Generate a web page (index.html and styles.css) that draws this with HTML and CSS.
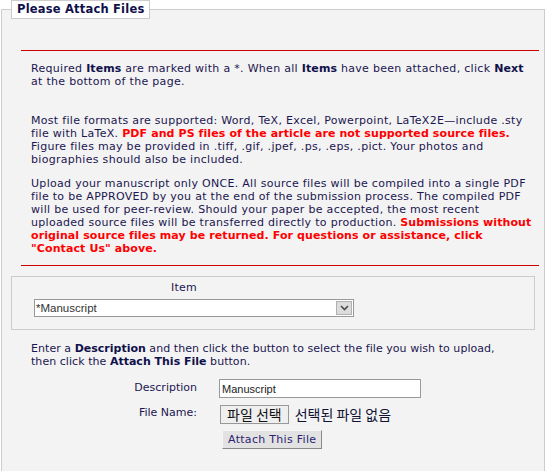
FILE: index.html
```html
<!DOCTYPE html>
<html lang="en">
<head>
  <meta charset="UTF-8" />
  <title>Please Attach Files</title>
  <link rel="stylesheet" href="styles.css">
</head>
<body>

  <fieldset class="attach">
    <legend>Please Attach Files</legend>

    <hr class="rule rule-top" />

    <p class="note note-first">Required <b>Items</b> are marked with a *. When all <b>Items</b> have been attached, click <b>Next</b> at the bottom of the page.</p>

    <p class="note">Most file formats are supported: Word, TeX, Excel, Powerpoint, LaTeX2E&mdash;include .sty file with LaTeX. <b class="warn">PDF and PS files of the article are not supported source files.</b> Figure files may be provided in .tiff, .gif, .jpef, .ps, .eps, .pict. Your photos and biographies should also be included.</p>

    <p class="note">Upload your manuscript only ONCE. All source files will be compiled into a single PDF file to be APPROVED by you at the end of the submission process. The compiled PDF will be used for peer-review. Should your paper be accepted, the most recent<br />uploaded source files will be transferred directly to production. <b class="warn">Submissions without original source files may be returned. For questions or assistance, click "Contact Us" above.</b></p>

    <hr class="rule rule-bottom" />

    <!-- item picker -->
    <div class="item-box">
      <div class="item-head">Item</div>
      <div class="select">
        <span class="select-text">*Manuscript</span>
        <span class="select-arrow">
          <svg width="9" height="6" viewBox="0 0 9 6"><path d="M1 1 L4.5 4.5 L8 1" fill="none" stroke="#4a4a4a" stroke-width="1.6"/></svg>
        </span>
      </div>
    </div>

    <p class="note note-enter">Enter a <b>Description</b> and then click the button to select the file you wish to upload, then click the <b>Attach This File</b> button.</p>

    <div class="form-grid">
      <label class="form-label">Description</label>
      <input class="text-input" type="text" value="Manuscript" />

      <label class="form-label">File Name:</label>
      <div class="file-row">
        <button class="file-btn" type="button">파일 선택</button>
        <span class="file-none">선택된 파일 없음</span>
      </div>

      <span></span>
      <div><button class="attach-btn" type="button">Attach This File</button></div>
    </div>
  </fieldset>

</body>
</html>
```

FILE: styles.css
```css
body {
  margin: 0;
  background: #fff;
  font-family: "DejaVu Sans", Verdana, sans-serif;
  font-size: 11px;
  letter-spacing: 0.3px;
  color: #1b1650;
}
.attach {
  margin: 0 1px;
  padding: 0;
  border: 1px solid #cccccc;
  background: #f3f3f3;
  min-height: 473px;
  box-sizing: border-box;
}
.attach legend {
  margin-left: 9px;
  padding: 1px 5px 2px;
  background: #fff;
  border: 1px solid #cccccc;
  font-weight: bold;
  font-size: 11.5px;
  letter-spacing: 0.2px;
  color: #10104a;
}
.rule {
  border: 0;
  border-top: 1px solid #cc0000;
  margin: 0 5px 0 19px;
  height: 0;
}
.rule-top {
  margin-top: 31px;
}
.rule-bottom {
  margin-top: 10px;
}
.note {
  margin: 11px 6px 0 29px;
  line-height: 13px;
}
.note-first {
  margin-top: 11px;
  margin-bottom: 26px;
}
.note b {
  color: #10104a;
  letter-spacing: 0.1px;
}
.note b.warn {
  color: #ff0000;
}
.item-box {
  margin: 10px 9px 0 9px;
  border: 1px solid #cccccc;
  padding: 4px 0 12px 22px;
}
.item-head {
  width: 300px;
  text-align: center;
  line-height: 13px;
  margin-bottom: 5px;
}
.select {
  display: flex;
  align-items: center;
  width: 320px;
  height: 18px;
  box-sizing: border-box;
  border: 1px solid #999;
  background: #fff;
  font-family: "Liberation Sans", Arial, sans-serif;
  font-size: 11.5px;
  letter-spacing: 0;
  color: #333;
}
.select-text {
  flex: 1;
  padding-left: 1px;
}
.select-arrow {
  display: flex;
  align-items: center;
  justify-content: center;
  width: 16px;
  height: 14px;
  margin-right: 1px;
  background: #dcdcdc;
  border: 1px solid #b0b0b0;
  box-sizing: border-box;
}
.note-enter {
  margin-top: 12px;
  margin-right: 30px;
  letter-spacing: 0.05px;
}
.note-enter b {
  letter-spacing: 0;
}
.form-grid {
  display: grid;
  grid-template-columns: 195px auto;
  column-gap: 22px;
  row-gap: 6px;
  margin-top: 11px;
  align-items: center;
}
.form-label {
  text-align: right;
  align-self: start;
  padding-top: 2px;
  letter-spacing: 0;
}
.text-input {
  width: 202px;
  height: 19px;
  box-sizing: border-box;
  margin: 0;
  border: 1px solid #999;
  padding: 1px 2px;
  font-family: "Liberation Sans", Arial, sans-serif;
  font-size: 11px;
  letter-spacing: 0;
  color: #222;
}
.file-row {
  display: flex;
  align-items: center;
  gap: 6px;
  font-family: "Noto Sans CJK KR", "DejaVu Sans", sans-serif;
  font-size: 14px;
  letter-spacing: 0;
  color: #111133;
}
.file-btn {
  margin: 0 0 0 1px;
  height: 19px;
  padding: 0 6px;
  font-family: "Noto Sans CJK KR", sans-serif;
  font-size: 14px;
  line-height: 17px;
  background: #efefef;
  border: 1px solid #999;
  color: #111;
}
.attach-btn {
  margin: 0 0 0 3px;
  height: 19px;
  padding: 0 5px;
  font-family: "DejaVu Sans", Verdana, sans-serif;
  font-size: 11px;
  letter-spacing: 0.3px;
  color: #2b2370;
  background: #e2e2e2;
  border: 1px solid #f5f5f5;
  border-right-color: #888;
  border-bottom-color: #888;
  cursor: pointer;
}
```
